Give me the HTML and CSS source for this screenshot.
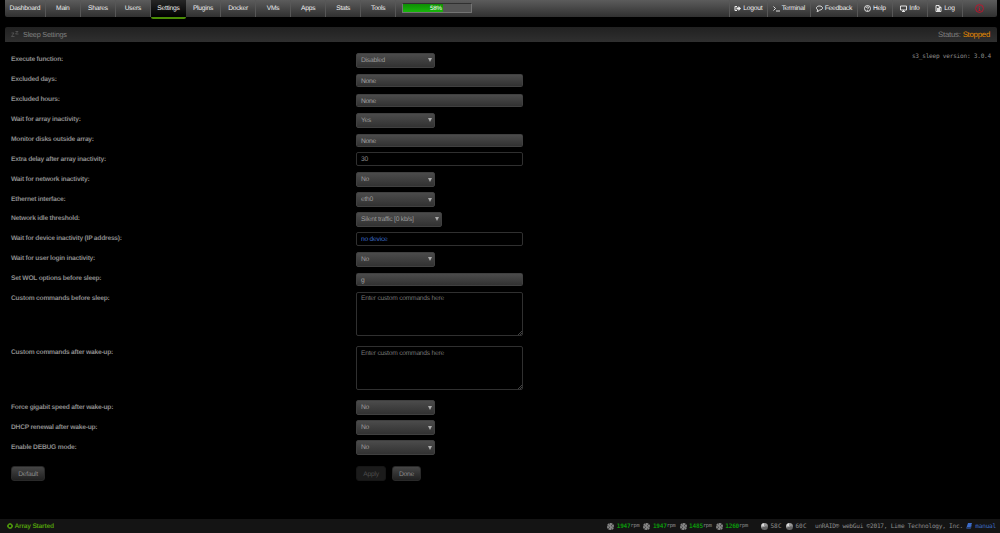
FILE: index.html
```html
<!DOCTYPE html>
<html lang="en">
<head>
  <meta charset="UTF-8">
  <meta name="viewport" content="width=device-width, initial-scale=1.0">
  <title>Sleep Settings</title>
  <link rel="stylesheet" href="styles.css">
</head>
<body>
  <nav class="menu">
    <a class="wide">Dashboard</a>
    <a>Main</a>
    <a>Shares</a>
    <a>Users</a>
    <a class="active">Settings</a>
    <a>Plugins</a>
    <a>Docker</a>
    <a>VMs</a>
    <a>Apps</a>
    <a>Stats</a>
    <a>Tools</a>
    <div class="usage"><div class="usage-bar" style="width: 58%">58%</div></div>
    <div class="tools">
      <a class="logout"><svg viewBox="0 0 14 14"><path d="M6 2H3Q1 2 1 4v6q0 2 2 2h3V10H3V4h3zM5 5h4V2l5 5-5 5V9H5z"/></svg>Logout</a>
      <a class="terminal"><svg viewBox="0 0 14 14"><path class="line" d="M1 3l4 4-4 4M6 12h8"/></svg>Terminal</a>
      <a class="feedback"><svg viewBox="0 0 14 14"><path class="line" d="M7 2c8 0 8 8 0 8-1 2-3 3-5 3l2-3C-1 8 0 2 7 2z"/></svg>Feedback</a>
      <a><svg viewBox="0 0 14 14"><circle class="line" cx="7" cy="7" r="6"/><path class="line" d="M4.8 5.5C5 3 9 3 9 5.5 9 7 7 7 7 8.5M7 10v1.5"/></svg>Help</a>
      <a><svg viewBox="0 0 14 14"><path class="line" d="M1 2h12v8H1zM4 13h6M7 10v3"/></svg>Info</a>
      <a><svg viewBox="0 0 14 14"><path class="line" d="M2 1h6l4 4v8H2zM8 1v4h4M4 7h6M4 9h6M4 11h6"/></svg>Log</a>
      <a><svg class="alert" viewBox="0 0 18 18"><circle cx="9" cy="9" r="7.8"/><path d="M9 4.5V6M7.5 8H9v5M7 13h4"/></svg></a>
    </div>
  </nav>

  <header class="title">
    <svg class="sleep" viewBox="0 0 16 12"><path d="M1 4h5L1 11h6M9 1h5L9 6h6"/></svg>
    <span>Sleep Settings</span>
    <span class="status">Status: <b>Stopped</b></span>
  </header>

  <main>
    <form class="settings">
      <div class="row">
        <label>Execute function:</label>
        <span class="select"><select><option>Disabled</option></select></span>
        <span class="version">s3_sleep version: 3.0.4</span>
      </div>
      <div class="row"><label>Excluded days:</label><div class="dropdown">None</div></div>
      <div class="row"><label>Excluded hours:</label><div class="dropdown">None</div></div>
      <div class="row"><label>Wait for array inactivity:</label><span class="select"><select><option>Yes</option></select></span></div>
      <div class="row"><label>Monitor disks outside array:</label><div class="dropdown">None</div></div>
      <div class="row"><label>Extra delay after array inactivity:</label><input type="text" value="30"></div>
      <div class="row"><label>Wait for network inactivity:</label><span class="select"><select><option>No</option></select></span></div>
      <div class="row"><label>Ethernet interface:</label><span class="select"><select><option>eth0</option></select></span></div>
      <div class="row"><label>Network idle threshold:</label><span class="select large"><select><option>Silent traffic [0 kb/s]</option></select></span></div>
      <div class="row"><label>Wait for device inactivity (IP address):</label><input class="device" type="text" value="no device"></div>
      <div class="row"><label>Wait for user login inactivity:</label><span class="select"><select><option>No</option></select></span></div>
      <div class="row"><label>Set WOL options before sleep:</label><div class="dropdown">g</div></div>
      <div class="row tall">
        <label>Custom commands before sleep:</label>
        <div class="textarea"><textarea placeholder="Enter custom commands here"></textarea><svg class="grip" viewBox="0 0 5 5"><path d="M0 5l5-5M2.5 5L5 2.5"/></svg></div>
      </div>
      <div class="row tall">
        <label>Custom commands after wake-up:</label>
        <div class="textarea"><textarea placeholder="Enter custom commands here"></textarea><svg class="grip" viewBox="0 0 5 5"><path d="M0 5l5-5M2.5 5L5 2.5"/></svg></div>
      </div>
      <div class="row"><label>Force gigabit speed after wake-up:</label><span class="select"><select><option>No</option></select></span></div>
      <div class="row"><label>DHCP renewal after wake-up:</label><span class="select"><select><option>No</option></select></span></div>
      <div class="row"><label>Enable DEBUG mode:</label><span class="select"><select><option>No</option></select></span></div>
      <div class="row buttons">
        <div class="left"><button type="button" class="default">Default</button></div>
        <button type="button" class="apply" disabled>Apply</button>
        <button type="button" class="done">Done</button>
      </div>
    </form>
  </main>

  <footer>
    <span class="array"><svg viewBox="0 0 12 12"><circle cx="6" cy="6" r="3.8"/><path d="M6 0v2M6 10v2M0 6h2M10 6h2M2 2l1 1M10 10L9 9M2 10l1-1M10 2L9 3"/></svg>Array Started</span>
    <span class="fan"><i></i><b>1947</b>rpm</span>
    <span class="fan"><i></i><b>1947</b>rpm</span>
    <span class="fan"><i></i><b>1485</b>rpm</span>
    <span class="fan"><i></i><b>1260</b>rpm</span>
    <span class="temp cpu"><i></i>58<em>C</em></span>
    <span class="temp"><i></i>60<em>C</em></span>
    <span class="copyright">unRAID® webGui ©2017, Lime Technology, Inc.</span>
    <a class="manual"><svg viewBox="0 0 12 12"><path d="M4 0h8L9 9H1z"/><path class="page" d="M1 9q-1 2 1 2h7l2-7M5 3h4M4 5h4"/></svg>manual</a>
  </footer>
</body>
</html>
```
FILE: styles.css
```css
:root {
  --text: #8c8c8c;
  --green: #4f9a0c;
  --orange: #e68a00;
  --blue: #3d6cc9;
  --mono: "DejaVu Sans Mono", monospace;
}

* {
  box-sizing: border-box;
}

body {
  margin: 0;
  height: 100vh;
  display: flex;
  flex-direction: column;
  overflow: hidden;
  background: #000;
  color: var(--text);
  font-family: "Liberation Sans", Arial, sans-serif;
  font-size: 6.7px;
  letter-spacing: -.24px;
  text-rendering: geometricPrecision;
}

input, select, textarea, button {
  font: inherit;
  letter-spacing: inherit;
  color: inherit;
  margin: 0;
  outline: none;
  text-rendering: geometricPrecision;
}

/* top menu */
.menu {
  display: flex;
  flex: none;
  height: 17px;
  margin: 0 3px 0 5px;
  background: linear-gradient(#5c5c5c, #303030);
  border-radius: 0 0 2px 2px;
}

.menu a {
  display: flex;
  align-items: center;
  justify-content: center;
  width: 35.05px;
  height: 17px;
  color: #f0f0f0;
  border-right: 1px solid #575757;
}

.menu a.wide {
  width: 40.8px;
}

.menu a.active {
  height: 19px;
  padding-bottom: 1px;
  background: linear-gradient(#262626, #000);
  border-right: none;
  border-bottom: 2px solid #4a8d05;
  border-radius: 0 0 2px 2px;
}

.usage {
  width: 70px;
  height: 10px;
  margin: 3px 0 0 6px;
  background: #555;
  border: 1px solid #747474;
  border-top-color: #303030;
  border-radius: 1px;
}

.usage-bar {
  height: 8px;
  padding-right: 1px;
  background: linear-gradient(#0e8d05, #18b60b);
  color: #fff;
  line-height: 9px;
  font-size: 6.2px;
  text-align: right;
}

.tools {
  display: flex;
  margin-left: auto;
  border-left: 1px solid #575757;
}

.tools svg {
  width: 7px;
  height: 7px;
  margin-right: 2px;
  fill: #f0f0f0;
}

.tools .line {
  fill: none;
  stroke: #f0f0f0;
  stroke-width: 1.8;
}

.menu .logout {
  width: 38px;
}

.menu .terminal {
  width: 43px;
}

.menu .feedback {
  width: 47px;
}

.menu .tools a:last-child {
  width: 34px;
  border-right: none;
}

.tools .alert {
  width: 9px;
  height: 9px;
  margin: 0 1px 0 0;
  fill: none;
  stroke: #c4122d;
  stroke-width: 1.8;
}

/* page title */
.title {
  display: flex;
  align-items: center;
  flex: none;
  height: 15px;
  margin: 10px 3px 0 5px;
  padding: 0 7px 0 6px;
  background: linear-gradient(#212121, #2f2f2f);
  border-radius: 2px 2px 0 0;
  color: #7f7f7f;
  font-size: 7.3px;
}

.sleep {
  width: 8px;
  height: 6px;
  margin: -2px 4px 0 0;
  fill: none;
  stroke: #5c5c5c;
  stroke-width: 1.5;
}

.status {
  margin-left: auto;
  font-size: 7.8px;
}

.status b {
  color: var(--orange);
  font-weight: normal;
}

/* settings form */
main {
  flex: 1;
  padding: 7.6px 9px 0 11px;
}

.row {
  display: flex;
  align-items: flex-start;
  height: 19.87px;
}

.row label {
  width: 345px;
  padding-top: .9px;
  font-weight: bold;
  line-height: 19.87px;
}

.row.tall {
  height: 54.5px;
}

.select {
  position: relative;
  width: 78.5px;
  height: 15px;
  margin-top: 3.4px;
}

.select.large {
  width: 85.5px;
}

.select::after {
  content: "";
  position: absolute;
  top: 5.5px;
  right: 3px;
  border: solid transparent;
  border-width: 0 2px;
  border-top: 4px solid #aaa;
}

select {
  display: block;
  width: 100%;
  height: 15px;
  padding: 0 5px 0 4px;
  appearance: none;
  background: linear-gradient(#4b4b4b, #323232);
  border: 1px solid #404040;
  border-radius: 2px;
  color: #9c9c9c;
}

.dropdown {
  width: 167px;
  height: 13px;
  margin-top: 4.5px;
  padding: 1px 4px 0;
  background: linear-gradient(#4b4b4b, #323232);
  border: 1px solid #404040;
  border-radius: 1.5px;
  color: #a4a4a4;
  line-height: 11px;
}

input {
  width: 167px;
  height: 14px;
  margin-top: 3.4px;
  padding: 1px 4px 0;
  background: #000;
  border: 1px solid #303030;
  border-radius: 2px;
}

input.device {
  color: var(--blue);
}

.textarea {
  position: relative;
  height: 44px;
  margin-top: 3.8px;
}

textarea {
  display: block;
  width: 167px;
  height: 44px;
  padding: 2.5px 4px;
  background: #000;
  border: 1px solid #303030;
  border-radius: 2px;
  resize: none;
}

textarea::placeholder {
  color: #757575;
}

.grip {
  position: absolute;
  right: 1px;
  bottom: 1px;
  width: 4px;
  height: 4px;
  stroke: #777;
  stroke-width: .7;
}

.version {
  margin: 3.4px 0 0 auto;
  font-family: var(--mono);
  font-size: 6.1px;
  letter-spacing: -.23px;
}

.buttons {
  padding-top: 10px;
}

.left {
  width: 345px;
}

button {
  height: 15px;
  padding: 1px 0 0;
  background: linear-gradient(#454545, #202020);
  border: 1px solid #292929;
  border-radius: 3px;
}

.default {
  width: 34px;
}

.apply {
  width: 30px;
  margin-right: 6px;
  background: #1b1b1b;
  border-color: #161616;
  color: #4c4c4c;
}

.done {
  width: 29px;
}

/* status bar */
footer {
  display: flex;
  align-items: center;
  flex: none;
  height: 14px;
  padding: 0 4px 0 7px;
  background: #141414;
  font-family: var(--mono);
  font-size: 6.1px;
  letter-spacing: -.23px;
  white-space: nowrap;
}

.array {
  display: flex;
  align-items: center;
  margin-right: auto;
  color: var(--green);
  font: bold 6.7px "Liberation Sans", Arial, sans-serif;
  letter-spacing: -.24px;
}

.array svg {
  width: 6px;
  height: 6px;
  margin-right: 1.5px;
  fill: none;
  stroke: var(--green);
  stroke-width: 2.6;
}

.fan, .temp {
  display: flex;
  align-items: center;
}

.fan {
  width: 36.2px;
  font-size: 5.3px;
}

.fan b {
  color: #0b960b;
  font-size: 6.1px;
}

.fan i, .temp i {
  width: 7px;
  height: 7px;
  margin-right: 2.5px;
  border-radius: 50%;
  background: repeating-conic-gradient(#858585 0 25deg, #4c4c4c 40deg 50deg, #858585 60deg);
}

.temp {
  width: 25px;
}

.cpu {
  margin-left: 9px;
}

.temp i {
  background: conic-gradient(#999 0 15%, #666 30% 65%, #aaa 75%, #ddd 85% 95%, #999);
}

.temp em {
  margin-left: .7px;
  font-style: normal;
}

.copyright {
  margin-left: 4px;
}

.manual {
  display: flex;
  align-items: center;
  margin-left: 3.5px;
  color: var(--blue);
}

.manual svg {
  width: 6px;
  height: 6px;
  margin-right: 3px;
  fill: var(--blue);
}

.manual .page {
  fill: none;
  stroke: var(--blue);
}
```
